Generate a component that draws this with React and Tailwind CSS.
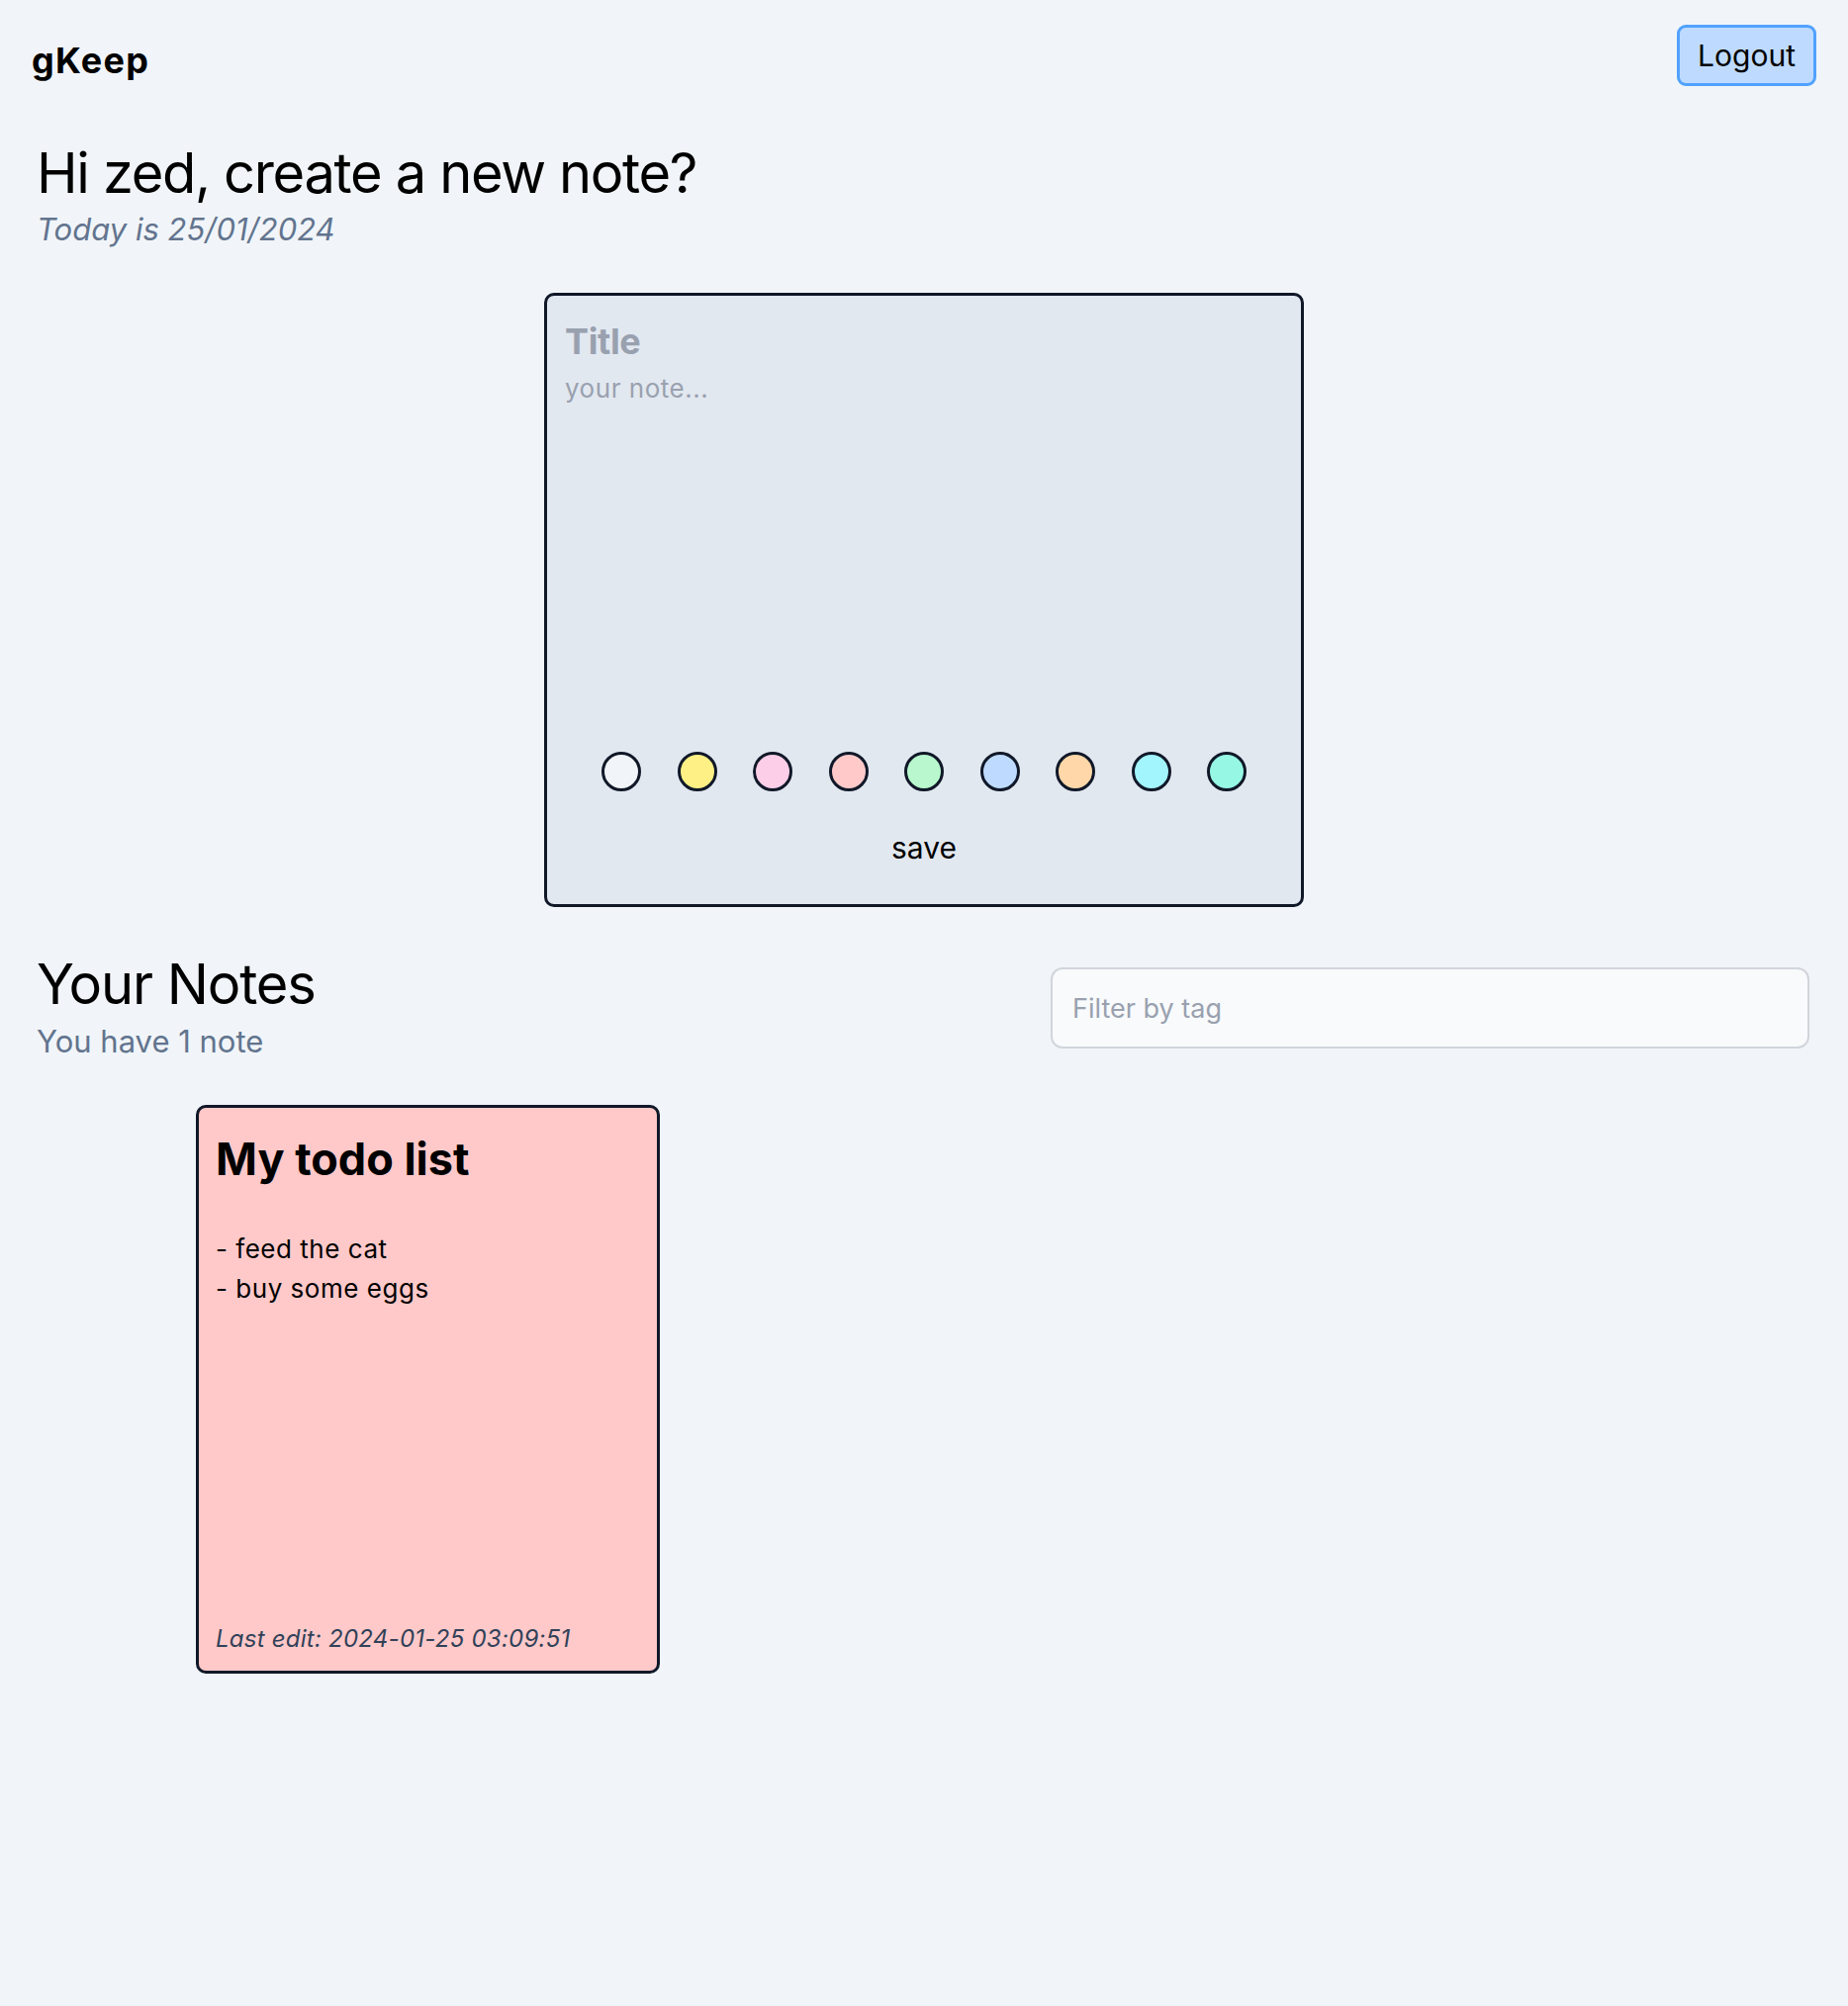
import React, { useState } from 'react'

const colors = [
  'bg-slate-100',
  'bg-yellow-200',
  'bg-pink-200',
  'bg-red-200',
  'bg-green-200',
  'bg-blue-200',
  'bg-orange-200',
  'bg-cyan-200',
  'bg-teal-200',
]

const notes = [
  {
    id: 1,
    title: 'My todo list',
    body: '- feed the cat\n- buy some eggs',
    color: 'bg-red-200',
    edited: '2024-01-25 03:09:51',
  },
]

const NoteCard = ({ note }) => (
  <div className={`w-[469px] h-[575px] flex flex-col border-[3px] border-gray-900 rounded-[10px] px-[17px] pt-[27px] pb-[17px] ${note.color}`}>
    <h3 className="text-[45px] leading-[50px] font-bold text-black">{note.title}</h3>
    <p className="mt-[46px] text-[26px] leading-[40px] tracking-[0.02em] text-black whitespace-pre-line">{note.body}</p>
    <p className="mt-auto text-[24px] leading-[30px] tracking-[0.01em] italic text-slate-700">Last edit: {note.edited}</p>
  </div>
)

export default function App() {
  const [color, setColor] = useState(0)
  const [tag, setTag] = useState('')

  return (
    <div className="min-h-screen bg-slate-100 text-black font-['Inter',sans-serif]">
      {/* header */}
      <header className="flex items-start justify-between px-[32px] pt-[25px]">
        <div className="mt-[16px] text-[36px] leading-[40px] font-bold tracking-[0.035em]">gKeep</div>
        <button className="px-[18px] py-[8px] text-[30px] leading-[40px] bg-blue-200 border-[3px] border-blue-400 rounded-[9px]">
          Logout
        </button>
      </header>

      {/* greeting */}
      <section className="px-[37px] mt-[58px]">
        <h1 className="text-[56px] leading-[60px] tracking-[-0.024em]">Hi zed, create a new note?</h1>
        <p className="mt-[7px] text-[31px] leading-[40px] italic text-slate-500">Today is 25/01/2024</p>
      </section>

      {/* editor */}
      <div className="mx-auto mt-[44px] w-[768px] h-[621px] flex flex-col bg-slate-200 border-[3px] border-gray-900 rounded-[10px] px-[18px] pt-[24px] pb-[37px]">
        <input
          placeholder="Title"
          className="bg-transparent outline-none text-[36px] leading-[45px] font-bold tracking-[-0.01em] placeholder:text-gray-400"
        />
        <textarea
          placeholder="your note..."
          className="mt-[7px] flex-1 resize-none bg-transparent outline-none text-[26px] leading-[35px] tracking-[0.02em] placeholder:text-gray-400"
        />
        <div className="flex justify-center gap-[36.5px] mt-[20px]">
          {colors.map((c, i) => (
            <button
              key={c}
              onClick={() => setColor(i)}
              className={`w-[40px] h-[40px] rounded-full border-[3px] border-gray-900 ${c}`}
            />
          ))}
        </div>
        <button className="mt-[37px] self-center text-[30px] leading-[40px]">save</button>
      </div>

      {/* notes header */}
      <section className="mt-[48px] flex items-center justify-between pl-[37px] pr-[39px]">
        <div>
          <h2 className="text-[56px] leading-[60px] tracking-[-0.02em]">Your Notes</h2>
          <p className="mt-[8px] text-[31px] leading-[40px] text-slate-500">You have {notes.length} note</p>
        </div>
        <input
          value={tag}
          onChange={(e) => setTag(e.target.value)}
          placeholder="Filter by tag"
          className="w-[767px] h-[82px] px-[20px] bg-slate-50 border-2 border-gray-300 rounded-[12px] outline-none text-[27px] placeholder:text-gray-400"
        />
      </section>

      {/* notes */}
      <div className="mt-[44px] pl-[198px] pb-[40px] flex flex-wrap gap-[40px]">
        {notes.map((n) => (
          <NoteCard key={n.id} note={n} />
        ))}
      </div>
    </div>
  )
}
